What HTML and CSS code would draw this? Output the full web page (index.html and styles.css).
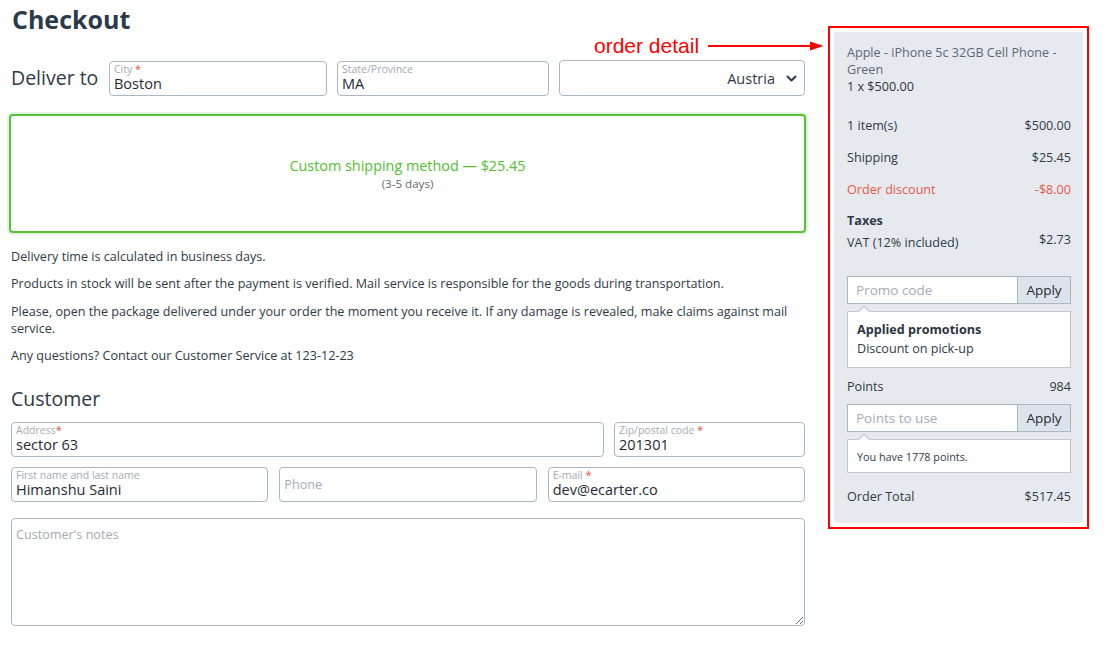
FILE: index.html
```html
<!DOCTYPE html>
<html lang="en">
<head>
<meta charset="utf-8">
<title>Checkout</title>
<link rel="stylesheet" href="styles.css">
</head>
<body>
<div class="page">
  <main class="main">
    <h1 class="title">Checkout</h1>
    <div class="deliver">
      <span class="deliver-label">Deliver to</span>
      <div class="field city"><span class="flabel">City <span class="req">*</span></span><span class="fvalue">Boston</span></div>
      <div class="field state"><span class="flabel">State/Province</span><span class="fvalue">MA</span></div>
      <div class="select"><span class="select-text">Austria</span>
        <svg class="chev" width="11" height="7" viewBox="0 0 11 7"><path d="M1.5 1.5 L5.5 5.5 L9.5 1.5" fill="none" stroke="#2f3b48" stroke-width="2" stroke-linecap="round" stroke-linejoin="round"/></svg>
      </div>
    </div>
    <div class="shipping">
      <div class="ship-name">Custom shipping method — $25.45</div>
      <div class="ship-days">(3-5 days)</div>
    </div>
    <div class="info">
      <p>Delivery time is calculated in business days.</p>
      <p>Products in stock will be sent after the payment is verified. Mail service is responsible for the goods during transportation.</p>
      <p>Please, open the package delivered under your order the moment you receive it. If any damage is revealed, make claims against mail service.</p>
      <p>Any questions? Contact our Customer Service at 123-12-23</p>
    </div>
    <h2 class="section">Customer</h2>
    <div class="row">
      <div class="field address"><span class="flabel">Address<span class="req">*</span></span><span class="fvalue">sector 63</span></div>
      <div class="field zip"><span class="flabel">Zip/postal code <span class="req">*</span></span><span class="fvalue">201301</span></div>
    </div>
    <div class="row row3">
      <div class="field third"><span class="flabel">First name and last name</span><span class="fvalue">Himanshu Saini</span></div>
      <div class="field third placeholder-field"><span class="ph">Phone</span></div>
      <div class="field third"><span class="flabel">E-mail <span class="req">*</span></span><span class="fvalue">dev@ecarter.co</span></div>
    </div>
    <textarea class="notes" placeholder="Customer's notes"></textarea>
  </main>

  <div class="summary-frame">
    <aside class="summary">
      <div class="product">
        <div class="product-name">Apple - iPhone 5c 32GB Cell Phone - Green</div>
        <div class="product-qty">1 x $500.00</div>
      </div>
      <div class="totals">
        <div class="trow"><span>1 item(s)</span><span>$500.00</span></div>
        <div class="trow"><span>Shipping</span><span>$25.45</span></div>
        <div class="trow discount"><span>Order discount</span><span>-$8.00</span></div>
        <div class="taxes">
          <div class="taxes-title">Taxes</div>
          <div class="vat"><span>VAT (12% included)</span><span class="vat-amt">$2.73</span></div>
        </div>
      </div>
      <div class="igroup promo">
        <span class="iph">Promo code</span>
        <span class="ibtn">Apply</span>
      </div>
      <div class="pop promos">
        <div class="pop-title">Applied promotions</div>
        <div class="pop-line">Discount on pick-up</div>
      </div>
      <div class="srow points"><span>Points</span><span>984</span></div>
      <div class="igroup">
        <span class="iph">Points to use</span>
        <span class="ibtn">Apply</span>
      </div>
      <div class="pop pts">You have 1778 points.</div>
      <div class="srow total"><span>Order Total</span><span>$517.45</span></div>
    </aside>
  </div>

  <div class="annotation">
    <span class="anno-text">order detail</span>
    <svg class="anno-arrow" width="116" height="12" viewBox="0 0 116 12"><line x1="0" y1="6" x2="104" y2="6" stroke="#f00" stroke-width="2"/><path d="M102 1.5 L115.5 6 L102 10.5 Z" fill="#f00"/></svg>
  </div>
</div>
</body>
</html>
```

FILE: styles.css
```css
* { box-sizing: border-box; }
html, body { margin: 0; padding: 0; background: #fff; }
body {
  font-family: "Open Sans", "DejaVu Sans", sans-serif;
  color: #2f3b48;
}
.page {
  position: relative;
  display: flex;
  align-items: flex-start;
  padding: 3px 0 0 11px;
  width: 1115px;
}
.main {
  width: 794px;
  display: flex;
  flex-direction: column;
}
.title {
  margin: 0 0 0 1px;
  font-size: 25px;
  font-weight: 700;
  line-height: 32px;
  color: #2b3a4a;
}
.deliver {
  margin-top: 25px;
  display: flex;
  align-items: center;
  gap: 10px;
  height: 36px;
}
.deliver-label {
  font-size: 19.5px;
  line-height: 26px;
  color: #2f3b48;
  white-space: nowrap;
  flex: 0 0 88px;
}
.field {
  height: 35px;
  border: 1px solid #aab7c4;
  border-radius: 4px;
  padding: 1px 4px 0;
  display: flex;
  flex-direction: column;
  background: #fff;
}
.flabel {
  font-size: 10.5px;
  line-height: 12px;
  color: #a3abb3;
  white-space: nowrap;
}
.req { color: #ef6a5e; font-size: 11px; font-weight: 600; }
.fvalue {
  font-size: 14.5px;
  line-height: 17px;
  color: #1f2a36;
  white-space: nowrap;
}
.city { width: 218px; flex-shrink: 0; }
.state { width: 212px; flex-shrink: 0; }
.select {
  height: 36px;
  flex: 1;
  border: 1px solid #aab7c4;
  border-radius: 4px;
  display: flex;
  align-items: center;
  justify-content: flex-end;
  padding-right: 7px;
  gap: 11px;
}
.select-text { font-size: 14.5px; color: #2f3b48; }
.shipping {
  margin: 18px -1px 0 -2px;
  height: 119px;
  border: 2px solid #58c237;
  border-radius: 4px;
  box-shadow: 0 0 0 2px rgba(88, 194, 55, 0.18);
  display: flex;
  flex-direction: column;
  align-items: center;
  justify-content: center;
}
.ship-name { font-size: 14.4px; line-height: 20px; color: #52bf2e; }
.ship-days { font-size: 11.6px; line-height: 16px; color: #5f6770; }
.info { margin-top: 14.5px; }
.info p {
  margin: 0 0 10.5px;
  font-size: 12.6px;
  line-height: 17px;
  color: #2f3a45;
}
.info p:last-child { margin-bottom: 0; }
.section {
  margin: 21.5px 0 10.5px;
  font-size: 19.5px;
  font-weight: 400;
  line-height: 26px;
  color: #2c3a47;
}
.row { display: flex; gap: 10px; }
.row3 { margin-top: 10px; gap: 11px; }
.address { flex: 1; }
.zip { width: 191px; }
.third { flex: 1; }
.placeholder-field { justify-content: center; padding-top: 0; }
.ph { font-size: 12.6px; color: #a3abb3; }
.notes {
  margin-top: 16px;
  height: 108px;
  width: 100%;
  border: 1px solid #aab7c4;
  border-radius: 4px;
  padding: 7px 4px;
  font-family: "Open Sans", "DejaVu Sans", sans-serif;
  font-size: 12.6px;
  color: #2f3b48;
  resize: vertical;
  display: block;
}
.notes::placeholder { color: #a3abb3; }

/* summary */
.summary-frame {
  margin: 23px 0 0 23px;
  border: 2px solid #f00;
  padding: 4px;
}
.summary {
  width: 249px;
  background: #e6eaee;
  border-radius: 0 0 4px 4px;
  padding: 11.5px 12px 18.5px 13px;
  font-size: 12.6px;
  line-height: 17px;
  color: #2f3b48;
}
.product-name { color: #5b6877; }
.product-qty { color: #2a3540; }
.totals { margin-top: 15.5px; }
.trow {
  display: flex;
  justify-content: space-between;
  padding: 7px 0;
  line-height: 17.5px;
}
.discount { color: #e8574a; margin-top: 0.5px; }
.taxes { padding: 7px 0; }
.taxes-title { font-weight: 700; line-height: 17.5px; }
.vat { display: flex; justify-content: space-between; margin-top: 4.5px; line-height: 17.5px; }
.vat-amt { margin-top: -3px; }
.igroup {
  margin-top: 17.5px;
  height: 28px;
  display: flex;
  border: 1px solid #aab7c4;
  background: #fff;
}
.iph {
  flex: 1;
  font-size: 13.5px;
  line-height: 26px;
  padding-left: 8px;
  color: #a2adb9;
}
.ibtn {
  width: 53px;
  border-left: 1px solid #aab7c4;
  background: #dde3ea;
  font-size: 13.5px;
  line-height: 26px;
  text-align: center;
  color: #1f2a36;
}
.pop {
  position: relative;
  margin-top: 7px;
  background: #fff;
  border: 1px solid #c2cad2;
}
.pop::before {
  content: "";
  position: absolute;
  top: -7px;
  left: 10px;
  border: 6px solid transparent;
  border-top: 0;
  border-bottom: 6px solid #c2cad2;
}
.pop::after {
  content: "";
  position: absolute;
  top: -5px;
  left: 11px;
  border: 5px solid transparent;
  border-top: 0;
  border-bottom: 5px solid #fff;
}
.promos { height: 57px; padding: 7.5px 9px 0; }
.pop-title { font-weight: 700; line-height: 19px; color: #2a3540; }
.pop-line { line-height: 19px; }
.srow { display: flex; justify-content: space-between; line-height: 17px; }
.points { margin: 9.5px 0 0; }
.points + .igroup { margin-top: 9.5px; }
.pts {
  height: 34px;
  font-size: 10.8px;
  line-height: 17px;
  padding: 8px 9px 0;
}
.total { margin-top: 14.5px; }

/* annotation overlay */
.annotation {
  position: absolute;
  left: 594px;
  top: 34px;
  display: flex;
  align-items: center;
  gap: 9px;
}
.anno-text {
  font-family: "Liberation Sans", Arial, sans-serif;
  font-size: 21px;
  line-height: 24px;
  color: #f00;
}
.anno-arrow { display: block; }
```
